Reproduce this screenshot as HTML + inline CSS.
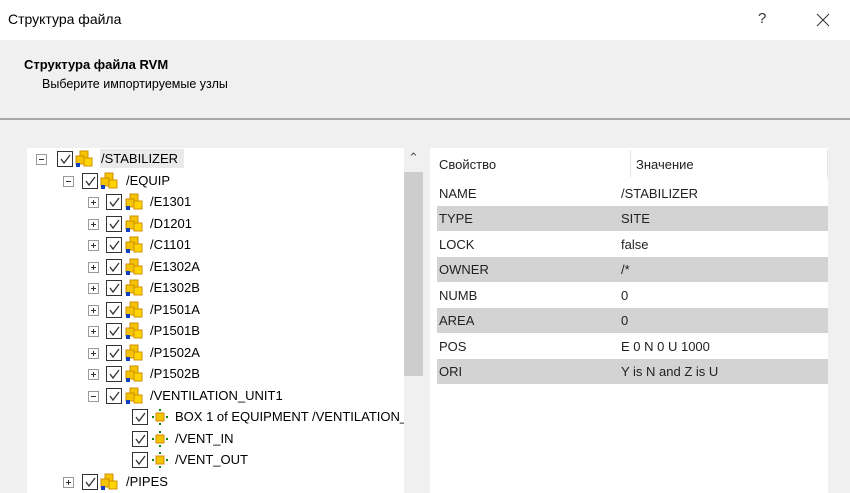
<!DOCTYPE html>
<html><head><meta charset="utf-8"><style>
body{margin:0;width:850px;height:493px;overflow:hidden;background:#f0f0f0;font-family:"Liberation Sans","DejaVu Sans",sans-serif;position:relative}
.a{position:absolute}
.t{font-size:13px;color:#000;white-space:nowrap}
.r{position:absolute;height:21px;left:0;width:404px}
.r>*{position:absolute;top:3px}
.ex{width:9px;height:9px;border:1px solid #9a9a9a;top:6px!important;background:#fff}
.ex:before{content:"";position:absolute;left:2px;top:4px;width:5px;height:1px;background:#333}
.ex.p:after{content:"";position:absolute;left:4px;top:2px;width:1px;height:5px;background:#333}
.cb{width:14px;height:14px;border:1px solid #333;background:#fff}
.cb svg{position:absolute;left:0;top:0}
.ic{width:18px;height:18px;top:2px!important}
.lb{font-size:13px;top:3px;color:#000;white-space:nowrap}
.tr{position:absolute;left:437px;width:391px;height:25px;font-size:13px;color:#222}
.tr span{position:absolute;top:5px}
.g{background:#d3d3d3}
</style></head><body>
<div class="a" style="left:0;top:0;width:850px;height:40px;background:#fff"></div>
<div class="a t" style="left:8px;top:11px;font-size:14px">Структура файла</div>
<div class="a t" style="left:758px;top:10px;font-size:15px;color:#333">?</div>
<div class="a" style="left:816px;top:13px"><svg width="14" height="14"><path d="M1 1L13 13M13 1L1 13" stroke="#333" stroke-width="1"/></svg></div>
<div class="a t" style="left:24px;top:57px;font-weight:bold">Структура файла RVM</div>
<div class="a t" style="left:42px;top:77px;font-size:12.5px">Выберите импортируемые узлы</div>
<div class="a" style="left:0;top:118px;width:850px;height:2px;background:#a8a8a8"></div>

<div class="a" style="left:27px;top:148px;width:377px;height:345px;background:#fff"></div>
<div class="a" style="left:100px;top:149px;width:84px;height:19px;background:#eaeaea"></div>
<div class="a" style="left:404px;top:148px;width:20px;height:345px;background:#f0f0f0"></div>
<div class="a t" style="left:408px;top:150px;font-size:13px;color:#555">⌃</div>
<div class="a" style="left:404px;top:172px;width:19px;height:204px;background:#cdcdcd"></div>

<div class="a" style="left:430px;top:148px;width:398px;height:345px;background:#fff"></div>
<div class="a" style="left:630px;top:150px;width:1px;height:27px;background:#e5e5e5"></div>
<div class="a" style="left:827px;top:150px;width:1px;height:27px;background:#e5e5e5"></div>
<div class="tr" style="top:152px"><span style="left:2px">Свойство</span><span style="left:199px">Значение</span></div>
<div class="tr" style="top:181px"><span style="left:2px">NAME</span><span style="left:184px">/STABILIZER</span></div>
<div class="tr g" style="top:206px"><span style="left:2px">TYPE</span><span style="left:184px">SITE</span></div>
<div class="tr" style="top:232px"><span style="left:2px">LOCK</span><span style="left:184px">false</span></div>
<div class="tr g" style="top:257px"><span style="left:2px">OWNER</span><span style="left:184px">/*</span></div>
<div class="tr" style="top:283px"><span style="left:2px">NUMB</span><span style="left:184px">0</span></div>
<div class="tr g" style="top:308px"><span style="left:2px">AREA</span><span style="left:184px">0</span></div>
<div class="tr" style="top:334px"><span style="left:2px">POS</span><span style="left:184px">E 0 N 0 U 1000</span></div>
<div class="tr g" style="top:359px"><span style="left:2px">ORI</span><span style="left:184px">Y is N and Z is U</span></div>

<div class="a" style="left:27px;top:148px;width:377px;height:345px;overflow:hidden">
<svg width="0" height="0" style="position:absolute"><defs>
<g id="y"><rect x="5" y="1" width="8" height="8" fill="#f5c400" stroke="#d09000"/><rect x="1" y="6" width="8" height="8" fill="#f5c400" stroke="#d09000"/><rect x="9" y="8" width="8" height="8" fill="#ffd400" stroke="#d09000"/><rect x="1" y="13" width="4" height="4" fill="#1040c0"/></g>
<g id="d"><rect x="5" y="5" width="8" height="8" fill="#f5c400" stroke="#d09000"/><rect x="8" y="1" width="2" height="2" fill="#108010"/><rect x="8" y="15" width="2" height="2" fill="#108010"/><rect x="1" y="8" width="2" height="2" fill="#108010"/><rect x="15" y="8" width="2" height="2" fill="#108010"/></g>
<path id="c" d="M3 7 L6 11 L12 3" fill="none" stroke="#333" stroke-width="1.3"/>
</defs></svg>
<div class="r" style="top:0"><div class="ex" style="left:9px"></div><div class="cb" style="left:30px"><svg width="14" height="14"><use href="#c"/></svg></div><svg class="ic" style="left:48px;position:absolute" width="18" height="18"><use href="#y"/></svg><div class="lb" style="left:74px">/STABILIZER</div></div>
<div class="r" style="top:21.5px"><div class="ex" style="left:36px"></div><div class="cb" style="left:55px"><svg width="14" height="14"><use href="#c"/></svg></div><svg class="ic" style="left:73px;position:absolute" width="18" height="18"><use href="#y"/></svg><div class="lb" style="left:99px">/EQUIP</div></div>
<div class="r" style="top:43px"><div class="ex p" style="left:61px"></div><div class="cb" style="left:79px"><svg width="14" height="14"><use href="#c"/></svg></div><svg class="ic" style="left:98px;position:absolute" width="18" height="18"><use href="#y"/></svg><div class="lb" style="left:123px">/E1301</div></div>
<div class="r" style="top:64.5px"><div class="ex p" style="left:61px"></div><div class="cb" style="left:79px"><svg width="14" height="14"><use href="#c"/></svg></div><svg class="ic" style="left:98px;position:absolute" width="18" height="18"><use href="#y"/></svg><div class="lb" style="left:123px">/D1201</div></div>
<div class="r" style="top:86px"><div class="ex p" style="left:61px"></div><div class="cb" style="left:79px"><svg width="14" height="14"><use href="#c"/></svg></div><svg class="ic" style="left:98px;position:absolute" width="18" height="18"><use href="#y"/></svg><div class="lb" style="left:123px">/C1101</div></div>
<div class="r" style="top:107.5px"><div class="ex p" style="left:61px"></div><div class="cb" style="left:79px"><svg width="14" height="14"><use href="#c"/></svg></div><svg class="ic" style="left:98px;position:absolute" width="18" height="18"><use href="#y"/></svg><div class="lb" style="left:123px">/E1302A</div></div>
<div class="r" style="top:129px"><div class="ex p" style="left:61px"></div><div class="cb" style="left:79px"><svg width="14" height="14"><use href="#c"/></svg></div><svg class="ic" style="left:98px;position:absolute" width="18" height="18"><use href="#y"/></svg><div class="lb" style="left:123px">/E1302B</div></div>
<div class="r" style="top:150.5px"><div class="ex p" style="left:61px"></div><div class="cb" style="left:79px"><svg width="14" height="14"><use href="#c"/></svg></div><svg class="ic" style="left:98px;position:absolute" width="18" height="18"><use href="#y"/></svg><div class="lb" style="left:123px">/P1501A</div></div>
<div class="r" style="top:172px"><div class="ex p" style="left:61px"></div><div class="cb" style="left:79px"><svg width="14" height="14"><use href="#c"/></svg></div><svg class="ic" style="left:98px;position:absolute" width="18" height="18"><use href="#y"/></svg><div class="lb" style="left:123px">/P1501B</div></div>
<div class="r" style="top:193.5px"><div class="ex p" style="left:61px"></div><div class="cb" style="left:79px"><svg width="14" height="14"><use href="#c"/></svg></div><svg class="ic" style="left:98px;position:absolute" width="18" height="18"><use href="#y"/></svg><div class="lb" style="left:123px">/P1502A</div></div>
<div class="r" style="top:215px"><div class="ex p" style="left:61px"></div><div class="cb" style="left:79px"><svg width="14" height="14"><use href="#c"/></svg></div><svg class="ic" style="left:98px;position:absolute" width="18" height="18"><use href="#y"/></svg><div class="lb" style="left:123px">/P1502B</div></div>
<div class="r" style="top:236.5px"><div class="ex" style="left:61px"></div><div class="cb" style="left:79px"><svg width="14" height="14"><use href="#c"/></svg></div><svg class="ic" style="left:98px;position:absolute" width="18" height="18"><use href="#y"/></svg><div class="lb" style="left:123px">/VENTILATION_UNIT1</div></div>
<div class="r" style="top:258px"><div class="cb" style="left:105px"><svg width="14" height="14"><use href="#c"/></svg></div><svg class="ic" style="left:124px;position:absolute" width="18" height="18"><use href="#d"/></svg><div class="lb" style="left:148px">BOX 1 of EQUIPMENT /VENTILATION_UNIT1</div></div>
<div class="r" style="top:279.5px"><div class="cb" style="left:105px"><svg width="14" height="14"><use href="#c"/></svg></div><svg class="ic" style="left:124px;position:absolute" width="18" height="18"><use href="#d"/></svg><div class="lb" style="left:148px">/VENT_IN</div></div>
<div class="r" style="top:301px"><div class="cb" style="left:105px"><svg width="14" height="14"><use href="#c"/></svg></div><svg class="ic" style="left:124px;position:absolute" width="18" height="18"><use href="#d"/></svg><div class="lb" style="left:148px">/VENT_OUT</div></div>
<div class="r" style="top:322.5px"><div class="ex p" style="left:36px"></div><div class="cb" style="left:55px"><svg width="14" height="14"><use href="#c"/></svg></div><svg class="ic" style="left:73px;position:absolute" width="18" height="18"><use href="#y"/></svg><div class="lb" style="left:99px">/PIPES</div></div>
</div>
</body></html>
